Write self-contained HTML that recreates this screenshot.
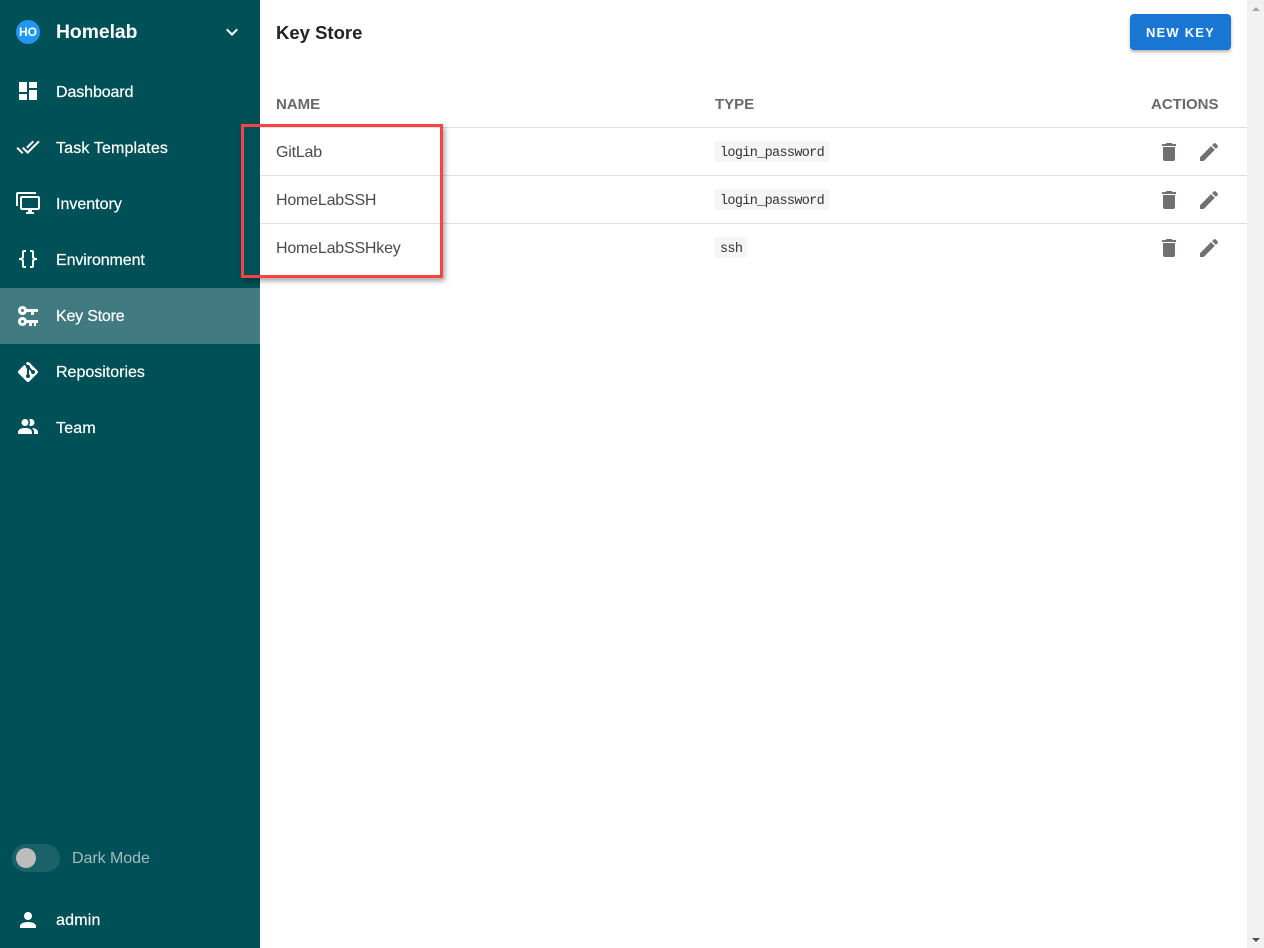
<!DOCTYPE html>
<html>
<head>
<meta charset="utf-8">
<style>
html,body{margin:0;padding:0;width:1264px;height:948px;overflow:hidden;background:#fff;font-family:"Liberation Sans",sans-serif}
.abs,.t,svg{position:absolute}
.side{position:absolute;left:0;top:0;width:260px;height:948px;background:#005057}
.t{white-space:nowrap;line-height:20px}
.nav{left:56px;color:#fff;font-size:16px;-webkit-text-stroke:.2px #fff}
.ic{left:16px;width:24px;height:24px;fill:#fff}
.act{width:24px;height:24px;fill:#757070}
.line{position:absolute;left:260px;width:987px;height:1px;background:#e0e0e0}
.th{color:#6b6767;font-size:15px;font-weight:bold;top:95px}
.name{left:276px;color:#4a4a4a;font-size:16px;letter-spacing:-.2px}
.code{position:absolute;left:714px;height:21px;background:#f5f5f5;border-radius:3px;color:#333;font:13.5px/25px "Liberation Mono",monospace;letter-spacing:-.67px;padding:0 6px;box-sizing:border-box;white-space:nowrap}
</style>
</head>
<body>
<div class="side"></div>

<div class="abs" style="left:16px;top:20px;width:24px;height:24px;border-radius:50%;background:#2196f3;color:#fff;font-size:12px;font-weight:bold;line-height:24px;text-align:center">HO</div>
<div class="t" style="left:56px;top:23px;color:#fff;font-size:19.3px;font-weight:bold">Homelab</div>
<svg style="left:220px;top:20px;width:24px;height:24px;fill:#fff" viewBox="0 0 24 24"><path d="M7.41,8.58L12,13.17L16.59,8.58L18,10L12,16L6,10L7.41,8.58Z"/></svg>

<div class="abs" style="left:0;top:288px;width:260px;height:56px;background:#417a80"></div>

<svg class="ic" style="top:79px" viewBox="0 0 24 24"><path d="M13,3V9H21V3M13,21H21V11H13M3,21H11V15H3M3,13H11V3H3V13Z"/></svg>
<div class="t nav" style="top:83px;letter-spacing:-.1px">Dashboard</div>

<svg class="ic" style="top:135px" viewBox="0 0 24 24"><path d="M0.41,13.41L6,19L7.41,17.58L1.83,12M22.24,5.58L11.66,16.17L7.5,12L6.07,13.41L11.66,19L23.66,7M18,7L16.59,5.58L10.24,11.93L11.66,13.34L18,7Z"/></svg>
<div class="t nav" style="top:139px;letter-spacing:.15px">Task Templates</div>

<svg class="ic" style="top:191px" viewBox="0 0 24 24"><path d="M22,17V7H6V17H22M22,5A2,2 0 0,1 24,7V17C24,18.11 23.1,19 22,19H16V21H18V23H10V21H12V19H6C4.89,19 4,18.11 4,17V7A2,2 0 0,1 6,5H22M2,3V15H0V3A2,2 0 0,1 2,1H20V3H2Z"/></svg>
<div class="t nav" style="top:195px">Inventory</div>

<svg class="ic" style="top:247px" viewBox="0 0 24 24"><path d="M8,3A2,2 0 0,0 6,5V9A2,2 0 0,1 4,11H3V13H4A2,2 0 0,1 6,15V19A2,2 0 0,0 8,21H10V19H8V14A2,2 0 0,0 6,12A2,2 0 0,0 8,10V5H10V3M16,3A2,2 0 0,1 18,5V9A2,2 0 0,0 20,11H21V13H20A2,2 0 0,0 18,15V19A2,2 0 0,1 16,21H14V19H16V14A2,2 0 0,1 18,12A2,2 0 0,1 16,10V5H14V3H16Z"/></svg>
<div class="t nav" style="top:251px;letter-spacing:-.1px">Environment</div>

<svg class="ic" style="top:304px" viewBox="0 0 24 24"><path d="M6.5,2C8.46,2 10.13,3.25 10.74,5H22V8H18V11H15V8H10.74C10.13,9.75 8.46,11 6.5,11C4,11 2,9 2,6.5C2,4 4,2 6.5,2M6.5,5A1.5,1.5 0 0,0 5,6.5A1.5,1.5 0 0,0 6.5,8A1.5,1.5 0 0,0 8,6.5A1.5,1.5 0 0,0 6.5,5M6.5,13C8.46,13 10.13,14.25 10.74,16H22V19H20V22H18V19H16V22H13V19H10.74C10.13,20.75 8.46,22 6.5,22C4,22 2,20 2,17.5C2,15 4,13 6.5,13M6.5,16A1.5,1.5 0 0,0 5,17.5A1.5,1.5 0 0,0 6.5,19A1.5,1.5 0 0,0 8,17.5A1.5,1.5 0 0,0 6.5,16Z"/></svg>
<div class="t nav" style="top:307px;letter-spacing:-.2px">Key Store</div>

<svg class="ic" style="top:360px" viewBox="0 0 24 24"><path d="M2.6,10.59L8.38,4.8L10.07,6.5C9.83,7.35 10.22,8.28 11,8.73V14.27C10.4,14.61 10,15.26 10,16A2,2 0 0,0 12,18A2,2 0 0,0 14,16C14,15.26 13.6,14.61 13,14.27V9.41L15.07,11.5C15,11.65 15,11.82 15,12A2,2 0 0,0 17,14A2,2 0 0,0 19,12A2,2 0 0,0 17,10C16.82,10 16.65,10 16.5,10.07L13.93,7.5C14.19,6.57 13.71,5.55 12.78,5.16C12.35,5 11.9,4.96 11.5,5.07L9.8,3.38L10.59,2.6C11.37,1.81 12.63,1.81 13.41,2.6L21.4,10.59C22.19,11.37 22.19,12.63 21.4,13.41L13.41,21.4C12.63,22.19 11.37,22.19 10.59,21.4L2.6,13.41C1.81,12.63 1.81,11.37 2.6,10.59Z"/></svg>
<div class="t nav" style="top:363px">Repositories</div>

<svg class="ic" style="top:415px" viewBox="0 0 24 24"><path d="M16 17V19H2V17S2 13 9 13 16 17 16 17M12.5 7.5A3.5 3.5 0 1 0 9 11A3.5 3.5 0 0 0 12.5 7.5M15.94 13A5.32 5.32 0 0 1 18 17V19H22V17S22 13.37 15.94 13M15 4A3.39 3.39 0 0 0 13.07 4.59A5 5 0 0 1 13.07 10.41A3.39 3.39 0 0 0 15 11A3.5 3.5 0 0 0 15 4Z"/></svg>
<div class="t nav" style="top:419px;letter-spacing:.2px">Team</div>

<div class="abs" style="left:12px;top:844px;width:48px;height:28px;border-radius:14px;background:#1b6168"></div>
<div class="abs" style="left:16px;top:848px;width:20px;height:20px;border-radius:50%;background:#bdbdbd"></div>
<div class="t" style="left:72px;top:849px;color:#a3bcc0;font-size:16px;letter-spacing:-.05px">Dark Mode</div>

<svg class="ic" style="top:908px" viewBox="0 0 24 24"><path d="M12,4A4,4 0 0,1 16,8A4,4 0 0,1 12,12A4,4 0 0,1 8,8A4,4 0 0,1 12,4M12,14C16.42,14 20,15.79 20,18V20H4V18C4,15.79 7.58,14 12,14Z"/></svg>
<div class="t nav" style="top:911px;letter-spacing:.2px">admin</div>

<div class="t" style="left:276px;top:23px;color:#222;font-size:18.5px;font-weight:bold;line-height:20px">Key Store</div>
<div class="abs" style="left:1130px;top:14px;width:101px;height:36px;background:#1976d2;border-radius:4px;box-shadow:0 2px 3px rgba(0,0,0,.3);color:#fff;font-size:13px;font-weight:bold;letter-spacing:1.2px;line-height:38px;text-align:center">NEW KEY</div>

<div class="t th" style="left:276px">NAME</div>
<div class="t th" style="left:715px">TYPE</div>
<div class="t th" style="left:1151px">ACTIONS</div>

<div class="line" style="top:127px"></div>
<div class="line" style="top:175px"></div>
<div class="line" style="top:223px"></div>

<div class="t name" style="top:143px;left:276px">GitLab</div>
<div class="t name" style="top:191px">HomeLabSSH</div>
<div class="t name" style="top:239px">HomeLabSSHkey</div>

<div class="code" style="top:141px;width:116px">login_password</div>
<div class="code" style="top:189px;width:116px">login_password</div>
<div class="code" style="top:237px;width:33px">ssh</div>

<svg class="act" style="left:1157px;top:140px" viewBox="0 0 24 24"><path d="M19,4H15.5L14.5,3H9.5L8.5,4H5V6H19M6,19A2,2 0 0,0 8,21H16A2,2 0 0,0 18,19V7H6V19Z"/></svg>
<svg class="act" style="left:1197px;top:140px" viewBox="0 0 24 24"><path d="M20.71,7.04C21.1,6.65 21.1,6 20.71,5.63L18.37,3.29C18,2.9 17.35,2.9 16.96,3.29L15.12,5.12L18.87,8.87M3,17.25V21H6.75L17.81,9.93L14.06,6.18L3,17.25Z"/></svg>
<svg class="act" style="left:1157px;top:188px" viewBox="0 0 24 24"><path d="M19,4H15.5L14.5,3H9.5L8.5,4H5V6H19M6,19A2,2 0 0,0 8,21H16A2,2 0 0,0 18,19V7H6V19Z"/></svg>
<svg class="act" style="left:1197px;top:188px" viewBox="0 0 24 24"><path d="M20.71,7.04C21.1,6.65 21.1,6 20.71,5.63L18.37,3.29C18,2.9 17.35,2.9 16.96,3.29L15.12,5.12L18.87,8.87M3,17.25V21H6.75L17.81,9.93L14.06,6.18L3,17.25Z"/></svg>
<svg class="act" style="left:1157px;top:236px" viewBox="0 0 24 24"><path d="M19,4H15.5L14.5,3H9.5L8.5,4H5V6H19M6,19A2,2 0 0,0 8,21H16A2,2 0 0,0 18,19V7H6V19Z"/></svg>
<svg class="act" style="left:1197px;top:236px" viewBox="0 0 24 24"><path d="M20.71,7.04C21.1,6.65 21.1,6 20.71,5.63L18.37,3.29C18,2.9 17.35,2.9 16.96,3.29L15.12,5.12L18.87,8.87M3,17.25V21H6.75L17.81,9.93L14.06,6.18L3,17.25Z"/></svg>

<div class="abs" style="left:241px;top:124px;width:202px;height:154px;box-sizing:border-box;border:3px solid #f44449;box-shadow:2px 3px 5px rgba(0,0,0,.35)"></div>

<div class="abs" style="left:1247px;top:0;width:17px;height:948px;background:#f1f1f1"></div>
<div class="abs" style="left:1252px;top:7px;width:0;height:0;border-left:4px solid transparent;border-right:4px solid transparent;border-bottom:4px solid #a3a3a3"></div>
<div class="abs" style="left:1252px;top:938px;width:0;height:0;border-left:4px solid transparent;border-right:4px solid transparent;border-top:4px solid #505050"></div>
</body>
</html>
